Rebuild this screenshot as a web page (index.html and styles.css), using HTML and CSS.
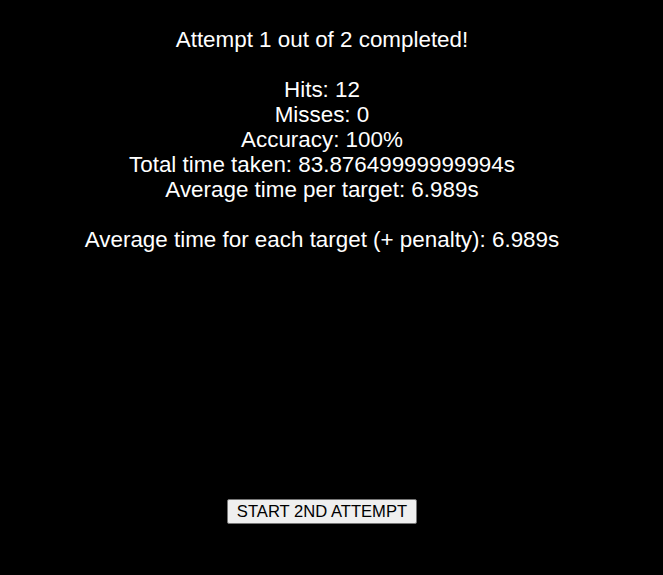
FILE: index.html
```html
<!DOCTYPE html>
<html>
<head>
<meta charset="utf-8">
<link rel="stylesheet" href="styles.css">
</head>
<body>
<div class="screen">
  <div class="results">
    <p class="line title">Attempt 1 out of 2 completed!</p>
    <div class="stats">
      <p class="line">Hits: 12</p>
      <p class="line">Misses: 0</p>
      <p class="line">Accuracy: 100%</p>
      <p class="line">Total time taken: 83.87649999999994s</p>
      <p class="line">Average time per target: 6.989s</p>
    </div>
    <p class="line">Average time for each target (+ penalty): 6.989s</p>
  </div>
  <button class="start">START 2ND ATTEMPT</button>
</div>
</body>
</html>
```
FILE: styles.css
```css
html, body {
  margin: 0;
  padding: 0;
  background: #000;
}
.screen {
  width: 644px;
  height: 575px;
  display: flex;
  flex-direction: column;
  align-items: center;
  padding-top: 27px;
  box-sizing: border-box;
  font-family: "Liberation Sans", Arial, sans-serif;
  color: #fff;
}
.results {
  display: flex;
  flex-direction: column;
  align-items: center;
  gap: 25px;
}
.line {
  margin: 0;
  font-size: 22.4px;
  line-height: 25px;
  text-align: center;
  white-space: nowrap;
}
.stats {
  display: flex;
  flex-direction: column;
  align-items: center;
}
.start {
  margin-top: 247px;
  font-family: "Liberation Sans", Arial, sans-serif;
  font-size: 16.6px;
  line-height: 19px;
  color: #000;
  background: #efefef;
  border: 1px solid #767676;
  border-radius: 2px;
  padding: 2px 9px 2px;
}
```
